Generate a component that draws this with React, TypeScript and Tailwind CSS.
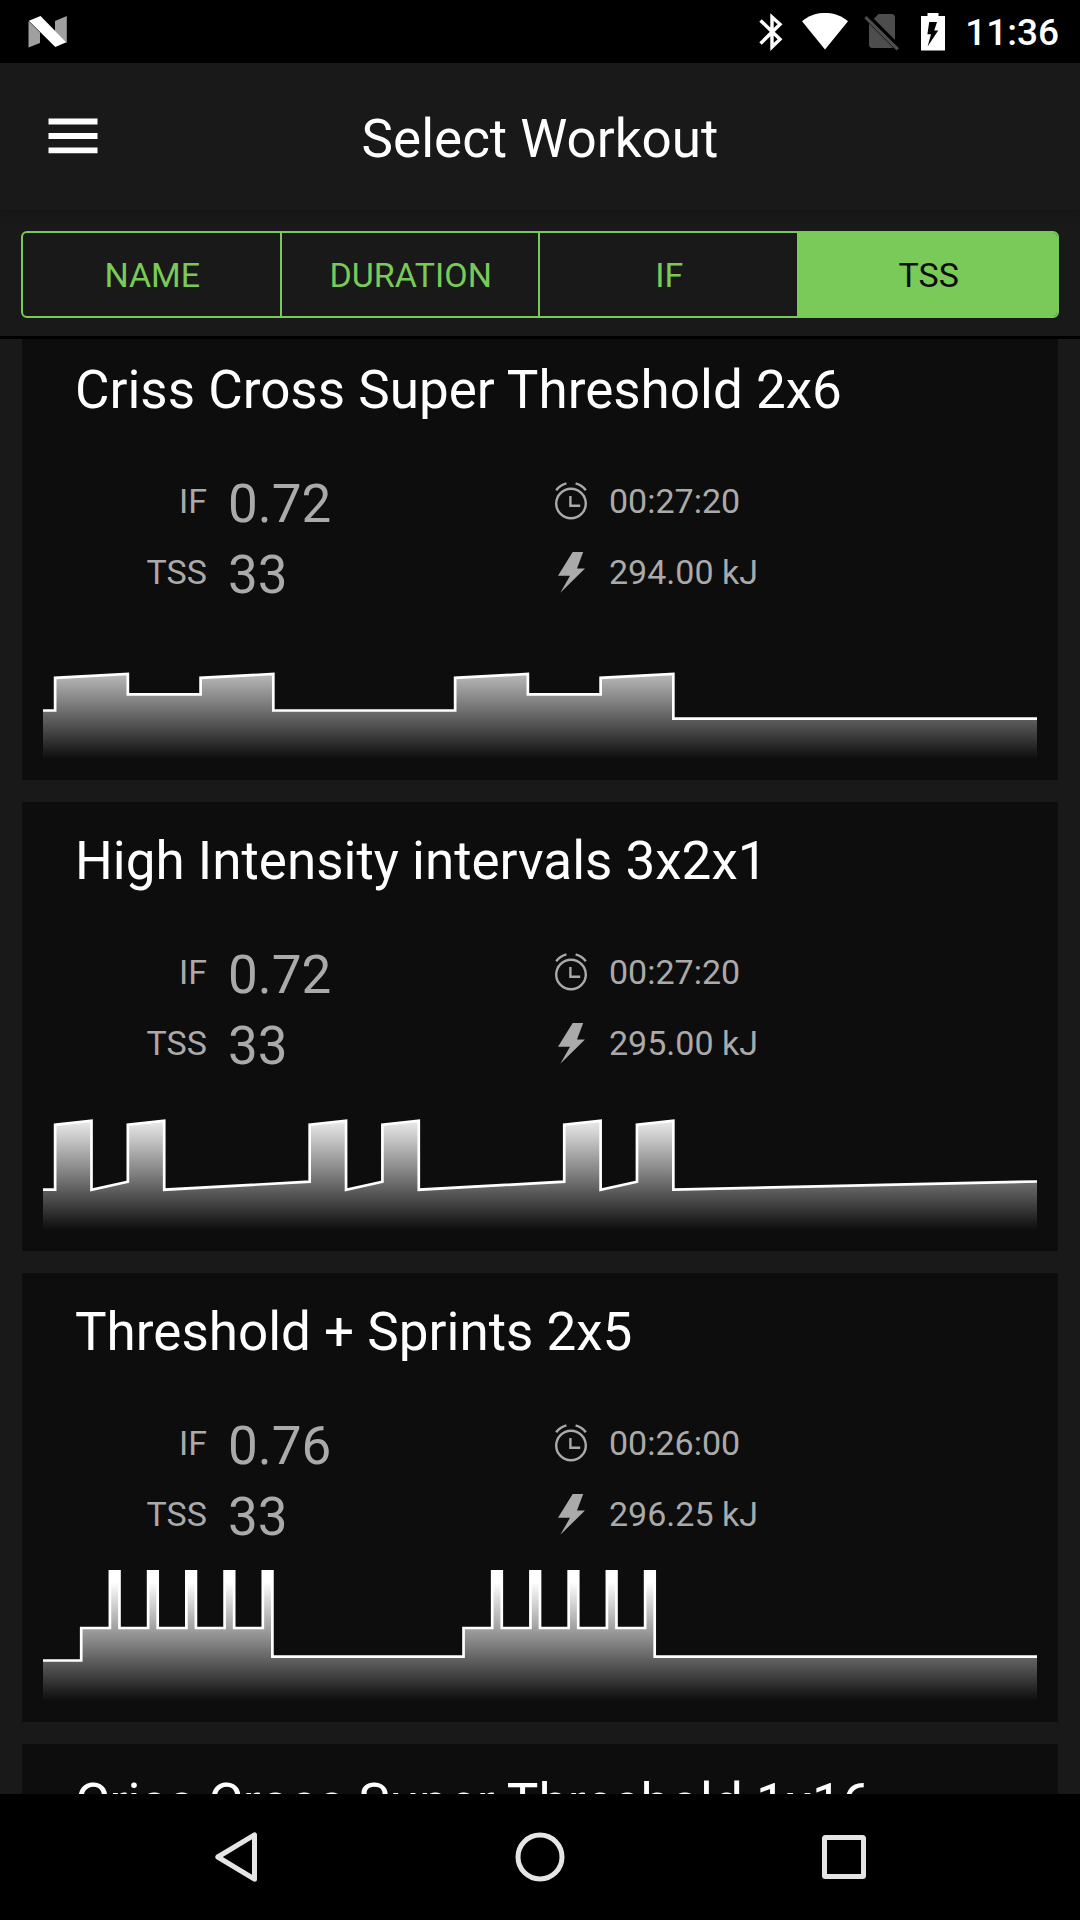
import { useState } from "react";

type Point = [seconds: number, level: number];

interface Workout {
  name: string;
  intensity: string;
  stress: string;
  time: string;
  energy: string;
  seconds: number;
  profile: Point[];
}

const CHART_HEIGHT = 131;

function sprintBlock(start: number): Point[] {
  const points: Point[] = [[start, 58]];
  for (let i = 0; i < 5; i++) {
    const on = start + 45 + i * 60;
    points.push([on, 58], [on, -10], [on + 15, -10]);
    if (i < 4) points.push([on + 15, 58]);
  }
  return points;
}

function sprintPair(start: number): Point[] {
  return [
    [start, 25.7], [start + 60, 21.7], [start + 60, 90.7], [start + 120, 82.7],
    [start + 120, 25.7], [start + 180, 21.7], [start + 180, 90.7],
  ];
}

const workouts: Workout[] = [
  {
    name: "Criss Cross Super Threshold 2x6",
    intensity: "0.72",
    stress: "33",
    time: "00:27:20",
    energy: "294.00 kJ",
    seconds: 1640,
    profile: [
      [0, 82.5], [20, 82.5], [20, 49.8], [140, 46], [140, 66.3], [260, 66.3],
      [260, 49.8], [380, 46], [380, 82.5], [680, 82.5], [680, 49.8], [800, 46],
      [800, 66.3], [920, 66.3], [920, 49.8], [1040, 46], [1040, 90.7], [1640, 90.7],
    ],
  },
  {
    name: "High Intensity intervals 3x2x1",
    intensity: "0.72",
    stress: "33",
    time: "00:27:20",
    energy: "295.00 kJ",
    seconds: 1640,
    profile: [
      [0, 90.7], [20, 90.7], ...sprintPair(20), [440, 82.7], ...sprintPair(440),
      [860, 82.7], ...sprintPair(860), [1640, 82.5],
    ],
  },
  {
    name: "Threshold + Sprints 2x5",
    intensity: "0.76",
    stress: "33",
    time: "00:26:00",
    energy: "296.25 kJ",
    seconds: 1560,
    profile: [
      [0, 90.5], [60, 90.5], ...sprintBlock(60), [360, 86.6], [660, 86.6],
      ...sprintBlock(660), [960, 86.6], [1560, 86.6],
    ],
  },
];

const nextWorkoutName = "Criss Cross Super Threshold 1x16";

function ProfileChart({ workout, id }: { workout: Workout; id: string }) {
  const line = workout.profile.map(([x, y]) => `${x},${y}`).join(" ");
  return (
    <svg
      className="block h-[131px] w-full"
      viewBox={`0 0 ${workout.seconds} ${CHART_HEIGHT}`}
      preserveAspectRatio="none"
      role="img"
      aria-label={`${workout.name} power profile`}
    >
      <defs>
        <linearGradient id={id} gradientUnits="userSpaceOnUse" x1="0" x2="0" y1="12" y2={CHART_HEIGHT}>
          <stop offset="0" stopColor="#fff" />
          <stop offset="1" stopColor="#fff" stopOpacity="0" />
        </linearGradient>
      </defs>
      <polygon
        points={`0,${CHART_HEIGHT} ${line} ${workout.seconds},${CHART_HEIGHT}`}
        fill={`url(#${id})`}
      />
      <polyline points={line} fill="none" stroke="#fff" strokeWidth="2.7" vectorEffect="non-scaling-stroke" />
    </svg>
  );
}

function ClockIcon() {
  return (
    <svg className="h-10 w-9" viewBox="0 0.5 36 40" fill="none" stroke="currentColor" strokeWidth="2.4" aria-label="Duration">
      <circle cx="18" cy="22" r="14.8" />
      <path d="M17.4 14.5v9.7h9.8M3.2 8.8C5.6 5.4 9.2 3 13.4 1.9M32.8 8.8C30.4 5.4 26.8 3 22.6 1.9" />
    </svg>
  );
}

function BoltIcon() {
  return (
    <svg className="h-[42px] w-9" viewBox="0 0 36 42" fill="currentColor" aria-label="Energy">
      <path d="M19.7 0H30.2L24 16.5H32L7.3 40.8 17 23.8H5Z" />
    </svg>
  );
}

function CardTitle({ children }: { children: string }) {
  return <h2 className="pl-8 text-[53px] leading-[64px] text-white">{children}</h2>;
}

function WorkoutCard({ workout, index }: { workout: Workout; index: number }) {
  return (
    <li className="bg-[#0d0d0d] px-[21px] pt-[27px] pb-[21px]">
      <CardTitle>{workout.name}</CardTitle>
      <div className="mt-11 mb-5 grid grid-cols-2 text-[34px] text-[#aaaaaa]">
        <div className="flex h-[71px] items-center gap-[21px]">
          <span className="w-[164px] text-right">IF</span>
          <span className="pt-1 text-[53px] leading-[64px]">{workout.intensity}</span>
        </div>
        <div className="flex h-[71px] items-center gap-[7px]">
          <span className="flex w-[62px] justify-center"><ClockIcon /></span>
          <span>{workout.time}</span>
        </div>
        <div className="flex h-[71px] items-center gap-[21px]">
          <span className="w-[164px] text-right">TSS</span>
          <span className="pt-1 text-[53px] leading-[64px]">{workout.stress}</span>
        </div>
        <div className="flex h-[71px] items-center gap-[7px]">
          <span className="flex w-[62px] justify-center"><BoltIcon /></span>
          <span>{workout.energy}</span>
        </div>
      </div>
      <ProfileChart workout={workout} id={`profile-${index}`} />
    </li>
  );
}

function StatusBar() {
  return (
    <div className="flex h-[63px] shrink-0 items-center justify-between bg-black pr-[21px] pl-7">
      <svg className="h-8 w-10" viewBox="0 0 40 32" aria-label="Android N">
        <path d="M0.5 5 12 16.5V27L0.5 31.5Z M27 5 38.8 0V27L27 15Z" fill="#a0a0a0" />
        <path d="M0.8 4.8 12.5 0 38.3 26.3 27.3 31Z" fill="#fff" />
      </svg>
      <div className="flex items-center text-white">
        <svg className="h-[38px] w-6" viewBox="0 0 24 38" fill="none" stroke="currentColor" strokeWidth="3.4" aria-label="Bluetooth">
          <path d="M1.5 7.5 21 26.3 13 34V4L21 11.2 1.5 30.5" />
        </svg>
        <svg className="ml-[18px] h-[38px] w-12" viewBox="0 0 48 38" fill="currentColor" aria-label="Wi-Fi">
          <path d="M1 8.3C14-2.9 34-2.9 47 8.3L24 36.5Z" />
        </svg>
        <svg className="ml-[15px] h-[38px] w-[35px]" viewBox="0 0 35 38" fill="#4d4d4d" aria-label="No SIM">
          <path d="M14.5 1H27.5Q31 1 31 4.5V27L9.8 5.8Z M5 10.6 29 34.4Q28.5 35 27 35H8.5Q5 35 5 31.5Z" />
          <path d="M2.5 3 35 35.3 32.6 37.5 0.3 5.2Z" />
        </svg>
        <svg className="ml-[22px] h-[38px] w-6" viewBox="0 0 24 38" aria-label="Battery charging">
          <path d="M6.5 0H17.5V3H24V37.5H0V3H6.5Z" fill="#fff" />
          <path d="M8.2 9H16L13.2 17.6H17.2L6.6 33.4 10 21.2H6.4Z" fill="#000" />
        </svg>
        <span className="ml-5 pt-[3px] text-[37px] leading-[48px] font-medium">11:36</span>
      </div>
    </div>
  );
}

const sortKeys = ["NAME", "DURATION", "IF", "TSS"];

export default function App() {
  const [sort, setSort] = useState("TSS");
  return (
    <div className="flex h-screen flex-col overflow-hidden bg-[#191919] font-[Roboto,sans-serif]">
      <StatusBar />
      <header className="relative flex h-[147px] shrink-0 items-center justify-center bg-[#191919] shadow-[0_2px_10px_rgba(0,0,0,0.25)]">
        <button type="button" aria-label="Open menu" className="absolute left-[48px] pb-0.5 text-white">
          <svg className="h-9 w-[50px]" viewBox="0 0 50 36" fill="currentColor">
            <path d="M0.5 0.6h49v5.8h-49zM0.5 15.1h49v5.8h-49zM0.5 29.4h49v5.8h-49z" />
          </svg>
        </button>
        <h1 className="pt-1 text-[53px] leading-[64px] text-white">Select Workout</h1>
      </header>
      <div className="shrink-0 border-b-[3px] border-black px-[21px] pt-[21px] pb-[18px]">
        <div
          role="group"
          aria-label="Sort workouts by"
          className="grid h-[87px] grid-cols-4 divide-x-2 divide-[#79ca59] overflow-hidden rounded-md border-2 border-[#79ca59] text-[34px]"
        >
          {sortKeys.map((key) => (
            <button
              key={key}
              type="button"
              aria-pressed={sort === key}
              onClick={() => setSort(key)}
              className={sort === key ? "bg-[#79ca59] pt-0.5 pl-0.5 text-[#0d0d0d]" : "pt-0.5 pl-0.5 text-[#79ca59]"}
            >
              {key}
            </button>
          ))}
        </div>
      </div>
      <main className="min-h-0 flex-1 overflow-y-auto px-[22px] [scrollbar-width:none]">
        <ul className="-mt-2 flex flex-col gap-[22px]">
          {workouts.map((workout, index) => (
            <WorkoutCard key={workout.name} workout={workout} index={index} />
          ))}
          <li className="bg-[#0d0d0d] px-[21px] pt-[27px] pb-[21px]">
            <CardTitle>{nextWorkoutName}</CardTitle>
          </li>
        </ul>
      </main>
      <nav aria-label="System" className="grid h-[126px] shrink-0 grid-cols-3 bg-black px-[84px] text-[#e5e5e5]">
        <button type="button" aria-label="Back" className="flex items-center justify-center">
          <svg className="h-[50px] w-[42px]" viewBox="0 0 42 50" fill="none" stroke="currentColor" strokeWidth="5" strokeLinejoin="round">
            <path d="M39.5 2.8V47.2L2.8 25Z" />
          </svg>
        </button>
        <button type="button" aria-label="Home" className="flex items-center justify-center">
          <svg className="h-[50px] w-[50px]" viewBox="0 0 50 50" fill="none" stroke="currentColor" strokeWidth="5">
            <circle cx="25" cy="25" r="22" />
          </svg>
        </button>
        <button type="button" aria-label="Recent apps" className="flex items-center justify-center">
          <svg className="h-11 w-11" viewBox="0 0 44 44" fill="none" stroke="currentColor" strokeWidth="5" strokeLinejoin="round">
            <rect x="2.5" y="2.5" width="39" height="39" rx="1" />
          </svg>
        </button>
      </nav>
    </div>
  );
}
